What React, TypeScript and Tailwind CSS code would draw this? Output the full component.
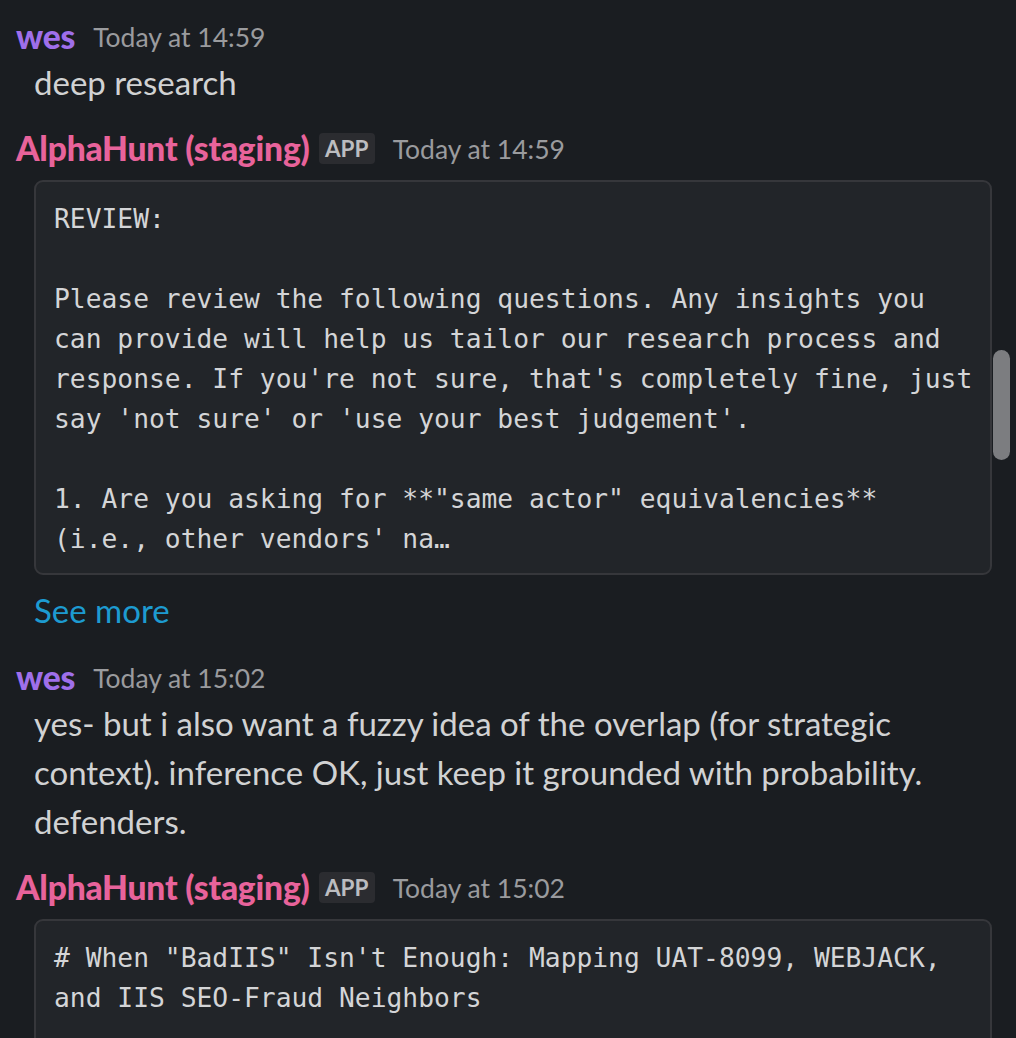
import React from 'react';

const sans = 'font-["Lato","Liberation_Sans",sans-serif]';
const mono = 'font-["DejaVu_Sans_Mono","Liberation_Mono",monospace]';

function Header({ name, color, time, app }: { name: string; color: string; time: string; app?: boolean }) {
    return (
        <div className="flex items-center h-[43px] pl-[16px]">
            <span className={`${color} font-black text-[33.6px] tracking-[-0.2px]`}>{name}</span>
            {app && (
                <span className="ml-[9px] h-[31px] w-[56px] flex items-center justify-center rounded-[4px] bg-[#2b2c30] text-[#bcbdc0] text-[22.5px] font-bold">APP</span>
            )}
            <span className="ml-[18px] text-[#9a9b9e] text-[26.5px] mt-[2px]">{time}</span>
        </div>
    );
}

function CodeBlock({ lines }: { lines: string[] }) {
    return (
        <div className={`ml-[34px] w-[958px] mt-[10px] rounded-[9px] border-2 border-[#36373b] bg-[#222529] px-[18px] pt-[17px] pb-[14px] ${mono} text-[26.3px] leading-[40px] text-[#d4d5d7] whitespace-pre`}>
            {lines.map((l, i) => (
                <div key={i} className="h-[40px]">{l}</div>
            ))}
        </div>
    );
}

export default function App() {
    return (
        <div className={`relative w-[1016px] h-[1038px] overflow-hidden bg-[#1a1d21] ${sans} pt-[15px]`}>
            {/* wes 14:59 */}
            <Header name="wes" color="text-[#9f6fea]" time="Today at 14:59" />
            <div className="pl-[34px] text-[33px] leading-[49px] text-[#d1d2d3]">deep research</div>

            {/* AlphaHunt */}
            <div className="mt-[20px]">
                <Header name="AlphaHunt (staging)" color="text-[#e8639b]" time="Today at 14:59" app />
                <CodeBlock
                    lines={[
                        'REVIEW:',
                        '',
                        'Please review the following questions. Any insights you',
                        'can provide will help us tailor our research process and',
                        "response. If you're not sure, that's completely fine, just",
                        "say 'not sure' or 'use your best judgement'.",
                        '',
                        '1. Are you asking for **"same actor" equivalencies**',
                        "(i.e., other vendors' na\u2026",
                    ]}
                />
                <div className="pl-[34px] mt-[11px] text-[33px] leading-[49px] text-[#1d9bd1]">See more</div>
            </div>

            {/* wes 15:02 */}
            <div className="mt-[21px]">
                <Header name="wes" color="text-[#9f6fea]" time="Today at 15:02" />
                <div className="pl-[34px] text-[33px] leading-[49px] text-[#d1d2d3]">
                    yes- but i also want a fuzzy idea of the overlap (for strategic
                    <br />
                    context). inference OK, just keep it grounded with probability.
                    <br />
                    defenders.
                </div>
            </div>

            {/* AlphaHunt 15:02 */}
            <div className="mt-[20px]">
                <Header name="AlphaHunt (staging)" color="text-[#e8639b]" time="Today at 15:02" app />
                <CodeBlock
                    lines={[
                        '# When "BadIIS" Isn\'t Enough: Mapping UAT-8099, WEBJACK,',
                        'and IIS SEO-Fraud Neighbors',
                        '',
                        '',
                    ]}
                />
            </div>

            {/* scrollbar thumb */}
            <div className="absolute left-[993px] top-[350px] w-[17px] h-[110px] rounded-full bg-[#7c7d80]" />
        </div>
    );
}
